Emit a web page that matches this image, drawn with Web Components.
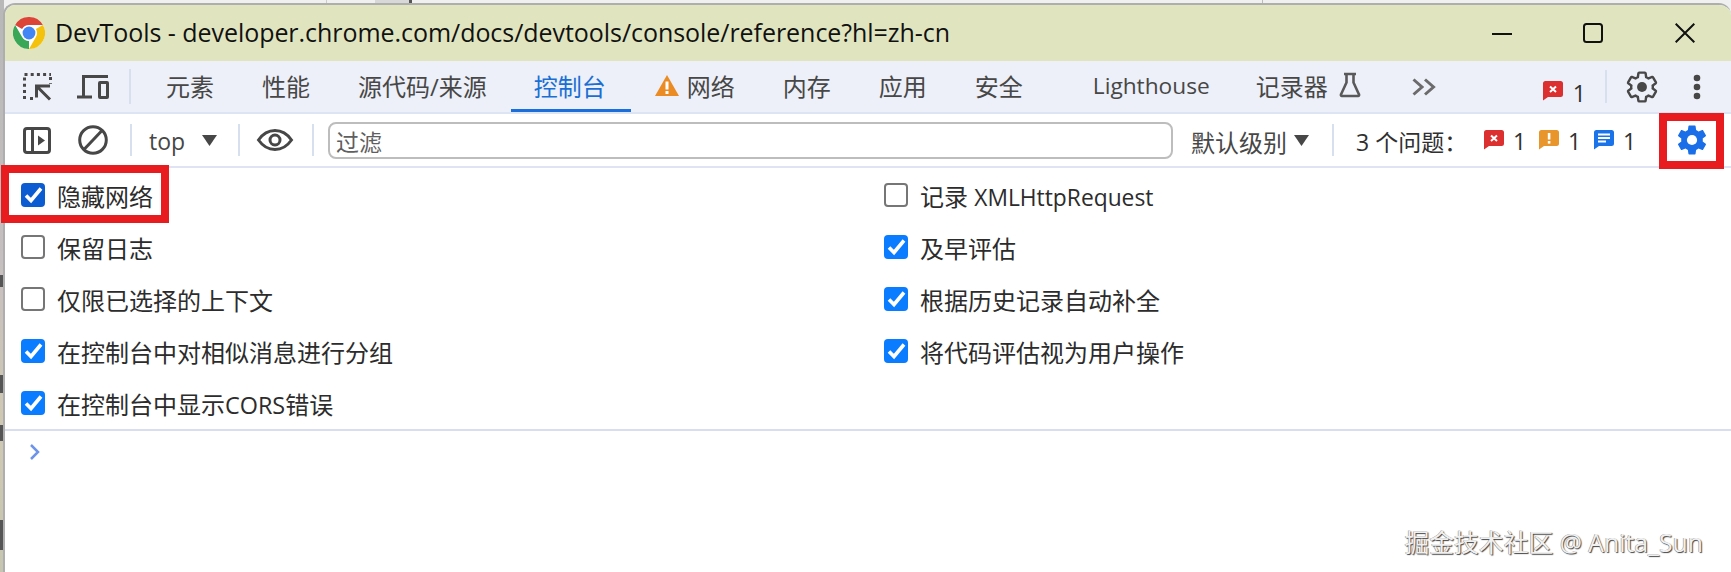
<!DOCTYPE html>
<html lang="zh-CN"><head><meta charset="utf-8"><title>DevTools</title>
<style>html,body{margin:0;padding:0;background:#fff}</style></head><body>
<dt-desktop>
  <dt-window>
    <dt-titlebar>DevTools - developer.chrome.com/docs/devtools/console/reference?hl=zh-cn</dt-titlebar>
    <dt-tabbar>
      <dt-icon name="inspect" style="margin-left:18px"></dt-icon>
      <dt-icon name="device" style="margin-left:25px"></dt-icon>
      <dt-divider style="margin-left:20px;margin-right:11px;height:35px"></dt-divider>
      <dt-tab>元素</dt-tab>
      <dt-tab>性能</dt-tab>
      <dt-tab>源代码/来源</dt-tab>
      <dt-tab active style="padding-left:23px;padding-right:25px">控制台</dt-tab>
      <dt-tab><dt-icon name="warn" style="margin-right:8px"></dt-icon>网络</dt-tab>
      <dt-tab>内存</dt-tab>
      <dt-tab>应用</dt-tab>
      <dt-tab>安全</dt-tab>
      <dt-tab style="margin-left:22px;font-size:22.700px">Lighthouse</dt-tab>
      <dt-tab style="margin-left:-2px">记录器<dt-icon name="flask" style="margin-left:11px"></dt-icon></dt-tab>
      <dt-icon name="more" style="margin-left:27px"></dt-icon>
      <dt-icon name="err" style="margin-left:107px;margin-top:9px"></dt-icon>
      <dt-count style="margin-left:10px;margin-top:11px;width:9px">1</dt-count>
      <dt-divider style="margin-left:23px;height:33px"></dt-divider>
      <dt-icon name="gear" style="margin-left:17px"></dt-icon>
      <dt-icon name="dots" style="margin-left:33px"></dt-icon>
    </dt-tabbar>
    <dt-toolbar>
      <dt-icon name="sidebar" style="margin-left:18px"></dt-icon>
      <dt-icon name="block" style="margin-left:27px"></dt-icon>
      <dt-divider style="margin-left:22px;height:32px"></dt-divider>
      <dt-label style="margin-left:17px;width:36px">top</dt-label>
      <dt-icon name="caret" style="margin-left:17px"></dt-icon>
      <dt-divider style="margin-left:21px;height:32px"></dt-divider>
      <dt-icon name="eye" style="margin-left:17px"></dt-icon>
      <dt-divider style="margin-left:19px;height:32px"></dt-divider>
      <dt-filter style="margin-left:14px">过滤</dt-filter>
      <dt-label style="margin-left:18px;width:96px;font-size:24px">默认级别</dt-label>
      <dt-icon name="caret" style="margin-left:7px"></dt-icon>
      <dt-divider style="margin-left:23px;height:32px"></dt-divider>
      <dt-label style="margin-left:22px;width:106px;color:#303030">3 个问题：</dt-label>
      <dt-icon name="err" style="margin-left:22px"></dt-icon>
      <dt-count style="margin-left:9px;width:12px">1</dt-count>
      <dt-icon name="warnb" style="margin-left:14px"></dt-icon>
      <dt-count style="margin-left:9px;width:13px">1</dt-count>
      <dt-icon name="info" style="margin-left:13px"></dt-icon>
      <dt-count style="margin-left:9px;width:12px">1</dt-count>
      <dt-icon name="gearblue" style="margin-left:39px;margin-right:21px"></dt-icon>
    </dt-toolbar>
    <dt-settings>
      <dt-check checked dark>隐藏网络</dt-check>
      <dt-check>保留日志</dt-check>
      <dt-check>仅限已选择的上下文</dt-check>
      <dt-check checked>在控制台中对相似消息进行分组</dt-check>
      <dt-check checked>在控制台中显示<span style="font-size:23.400px">CORS</span>错误</dt-check>
      <dt-check>记录 <span style="font-size:22.800px">XMLHttpRequest</span></dt-check>
      <dt-check checked>及早评估</dt-check>
      <dt-check checked>根据历史记录自动补全</dt-check>
      <dt-check checked>将代码评估视为用户操作</dt-check>
    </dt-settings>
    <dt-console></dt-console>
  </dt-window>
  <dt-redbox style="left:1px;top:165px;width:168px;height:58px"></dt-redbox>
  <dt-redbox style="left:1659px;top:113px;width:65px;height:56px"></dt-redbox>
  <dt-watermark>掘金技术社区 @ Anita_Sun</dt-watermark>
</dt-desktop>
<script>
const GEAR_OUTER="M19.14 12.94c.04-.3.06-.61.06-.94 0-.32-.02-.64-.07-.94l2.03-1.58c.18-.14.23-.41.12-.61l-1.92-3.32c-.12-.22-.37-.29-.59-.22l-2.39.96c-.5-.38-1.03-.7-1.62-.94l-.36-2.54c-.04-.24-.24-.41-.48-.41h-3.84c-.24 0-.43.17-.47.41l-.36 2.54c-.59.24-1.13.57-1.62.94l-2.39-.96c-.22-.08-.47 0-.59.22L2.74 8.87c-.12.21-.08.47.12.61l2.03 1.58c-.05.3-.09.63-.09.94s.02.64.07.94l-2.03 1.58c-.18.14-.23.41-.12.61l1.92 3.32c.12.22.37.29.59.22l2.39-.96c.5.38 1.03.7 1.62.94l.36 2.54c.05.24.24.41.48.41h3.84c.24 0 .44-.17.47-.41l.36-2.54c.59-.24 1.13-.56 1.62-.94l2.39.96c.22.08.47 0 .59-.22l1.92-3.32c.12-.22.07-.47-.12-.61l-2.01-1.58z";
const BUBBLE="M2.5 0h15A2.5 2.5 0 0 1 20 2.5v11a2.5 2.5 0 0 1-2.5 2.5H5l-5 3.5V2.5A2.5 2.5 0 0 1 2.5 0z";
const ICONS={
 inspect:[29,27,`<g fill="none" stroke="#474747" stroke-width="3"><path d="M1.5 1.5H28" stroke-dasharray="3 3.2"/><path d="M1.5 4.5V26" stroke-dasharray="3 3.2"/><path d="M27.5 4V11" stroke-dasharray="3 3.2"/><path d="M7 25.5h3" /><path d="M27 13H13.500V24.500M13.500 13 27 26.500" stroke-width="3"/></g>`],
 device:[32,24,`<g fill="none" stroke="#474747" stroke-width="3"><path d="M0 22h15M6.500 22V1.500H31"/><rect x="22.500" y="7.500" width="8" height="15" rx=".5"/></g>`],
 warn:[24,21,`<path d="M12 0 24 21H0z" fill="#ea8b24"/><rect x="10.500" y="6.500" width="3" height="8" fill="#fff"/><rect x="10.500" y="16" width="3" height="3" fill="#fff"/>`],
 flask:[22,26,`<path d="M5 2h12M7.500 2v8.500L2 22.500a1 1 0 0 0 1 1.500h16a1 1 0 0 0 1-1.500L14.500 10.500V2" fill="none" stroke="#595959" stroke-width="2.600"/>`],
 more:[24,18,`<path d="M1.500 1.500 10 9l-8.500 7.500M13 1.500 21.500 9 13 16.500" fill="none" stroke="#6b6b6b" stroke-width="3"/>`],
 err:[20,20,`<path d="${BUBBLE}" fill="#dc2f2f"/><path d="M7 5.500l6 5.500M13 5.500l-6 5.500" stroke="#fff" stroke-width="2"/>`],
 warnb:[20,20,`<path d="${BUBBLE}" fill="#e8952b"/><rect x="8.800" y="3" width="2.600" height="6.500" fill="#fff"/><rect x="8.800" y="11" width="2.600" height="2.600" fill="#fff"/>`],
 info:[20,20,`<path d="${BUBBLE}" fill="#1a73e8"/><path d="M4 4.500h12M4 8h12M4 11.500h8" stroke="#fff" stroke-width="2"/>`],
 gear:[36,36,`<svg x="0" y="0" width="36" height="36" viewBox="0 0 24 24"><path d="${GEAR_OUTER}" fill="none" stroke="#474747" stroke-width="1.600"/><circle cx="12" cy="12" r="3.300" fill="#474747"/></svg>`],
 gearblue:[36,36,`<svg width="36" height="36" viewBox="0 0 24 24"><path d="${GEAR_OUTER}" fill="#1a6fe8"/><circle cx="12" cy="12" r="3.400" fill="#fff"/></svg>`],
 dots:[8,26,`<circle cx="4" cy="4" r="3.300" fill="#474747"/><circle cx="4" cy="13" r="3.300" fill="#474747"/><circle cx="4" cy="22" r="3.300" fill="#474747"/>`],
 sidebar:[28,27,`<rect x="1.500" y="1.500" width="25" height="24" rx="2.500" fill="none" stroke="#474747" stroke-width="3"/><path d="M9.500 2v23" stroke="#474747" stroke-width="3"/><path d="M15 8.500l7 5-7 5z" fill="#474747"/>`],
 block:[30,30,`<circle cx="15" cy="15" r="13.300" fill="none" stroke="#474747" stroke-width="3"/><path d="M6 24.500 24 5.500" stroke="#474747" stroke-width="3"/>`],
 caret:[15,11,`<path d="M0 0h15L7.500 11z" fill="#474747"/>`],
 eye:[36,22,`<path d="M1.500 11C6 4.500 11.500 1.500 18 1.500S30 4.500 34.500 11C30 17.500 24.500 20.500 18 20.500S6 17.500 1.500 11z" fill="none" stroke="#474747" stroke-width="3"/><circle cx="18" cy="11" r="5" fill="none" stroke="#474747" stroke-width="3"/>`]
};
const FONT='"Open Sans","Noto Sans CJK SC",sans-serif';
function def(name,html){
  customElements.define(name,class extends HTMLElement{
    connectedCallback(){
      if(this.shadowRoot)return;
      const r=this.attachShadow({mode:'open'});
      r.innerHTML=typeof html==='function'?html(this):html;
    }
  });
}
def('dt-desktop',`<style>:host{display:block;position:relative;width:1731px;height:572px;overflow:hidden;
  font-family:${FONT};background:
  linear-gradient(#555,#555) 409px 0/3px 5px no-repeat,
  linear-gradient(#d8d8d8,#d8d8d8) 375px 0/34px 5px no-repeat,
  linear-gradient(#ccc,#ccc) 326px 0/1px 5px no-repeat,
  linear-gradient(#bbb,#bbb) 1262px 0/1px 5px no-repeat,
  linear-gradient(#555,#555) 0 275px/3px 12px no-repeat,
  linear-gradient(#555,#555) 0 375px/3px 18px no-repeat,
  linear-gradient(#555,#555) 0 425px/3px 16px no-repeat,
  linear-gradient(#555,#555) 0 520px/3px 30px no-repeat,
  linear-gradient(#b8b8b8,#c6bfc0 45%,#cfc9b2 75%,#c6c6b0) 0 0/4px 100% no-repeat,
  #f0f0f0}</style><slot></slot>`);
def('dt-window',`<style>:host{position:absolute;left:3px;top:3px;right:0;bottom:0;display:flex;flex-direction:column;
  background:#fff;border-left:2px solid #aeaeae;border-top:2px solid #aeaeae;border-top-left-radius:12px;border-top-right-radius:12px;overflow:hidden}</style><slot></slot>`);
def('dt-titlebar',`<style>:host{display:flex;align-items:center;height:56px;flex:none;background:#e0e5c0;color:#111;font-size:25px}
 .t{margin-left:10px;white-space:nowrap;letter-spacing:-.05px;position:relative;top:-1px}.c{margin-left:auto;display:flex;align-items:center}
 svg{display:block}</style>
 <svg width="32" height="32" viewBox="0 0 32 32" style="margin-left:8px;flex:none">
  <circle cx="16" cy="16" r="16" fill="#fff"/>
  <path d="M2.140 8A16 16 0 0 1 29.860 8H16A8 8 0 0 0 9.070 12z" fill="#db4437"/>
  <path d="M2.140 8A16 16 0 0 1 29.860 8H16A8 8 0 0 0 9.070 12z" fill="#f4c20d" transform="rotate(120 16 16)"/>
  <path d="M2.140 8A16 16 0 0 1 29.860 8H16A8 8 0 0 0 9.070 12z" fill="#3aa757" transform="rotate(240 16 16)"/>
  <circle cx="16" cy="16" r="6.400" fill="#4285f4"/></svg>
 <span class="t"><slot></slot></span>
 <span class="c">
  <svg width="20" height="20" style="margin-right:71px"><path d="M0 11h20" stroke="#111" stroke-width="2"/></svg>
  <svg width="20" height="20" style="margin-right:72px"><rect x="1" y="1" width="18" height="18" rx="2.500" fill="none" stroke="#111" stroke-width="2"/></svg>
  <svg width="20" height="20" style="margin-right:36px"><path d="M.7.7l18.600 18.600M19.300.7.7 19.300" stroke="#111" stroke-width="2"/></svg>
 </span>`);
def('dt-tabbar',`<style>:host{display:flex;align-items:center;height:51px;flex:none;background:#edf0f8;border-bottom:2px solid #dde5f4}</style><slot></slot>`);
def('dt-toolbar',`<style>:host{display:flex;align-items:center;height:52px;flex:none;background:#fff;border-bottom:2px solid #e0e3f3}</style><slot></slot>`);
def('dt-tab',`<style>:host{display:flex;align-items:center;align-self:stretch;flex:none;padding:0 24px;box-sizing:border-box;font-size:24px;color:#474747;border-bottom:3px solid transparent;white-space:nowrap}
 :host([active]){color:#1a6fd4;border-bottom-color:#1a6fdc}</style><slot></slot>`);
def('dt-divider',`<style>:host{display:block;width:2px;flex:none;background:#d6e0ee}</style>`);
def('dt-icon',el=>{const [w,h,b]=ICONS[el.getAttribute('name')];
 return `<style>:host{display:block;flex:none;width:${w}px;height:${h}px}svg{display:block;overflow:visible}</style><svg width="${w}" height="${h}" viewBox="0 0 ${w} ${h}">${b}</svg>`});
def('dt-label',`<style>:host{display:block;flex:none;font-size:23px;color:#474747;white-space:nowrap;padding-top:2px}</style><slot></slot>`);
def('dt-count',`<style>:host{display:block;flex:none;font-size:23px;color:#303030;line-height:1;padding-top:2px}</style><slot></slot>`);
def('dt-filter',`<style>:host{display:flex;align-items:center;flex:1;min-width:0;height:37px;box-sizing:border-box;border:2px solid #bdbdbd;border-radius:8px;padding:2px 0 0 6px;font-size:23px;color:#5f5f5f}</style><slot></slot>`);
def('dt-settings',`<style>:host{display:grid;flex:none;grid-template-rows:repeat(5,52px);grid-auto-flow:column;grid-template-columns:863px 1fr;height:260px;padding-left:16px;padding-top:1px;border-bottom:2px solid #d8deef}</style><slot></slot>`);
def('dt-check',el=>{const c=el.hasAttribute('checked');
 return `<style>:host{display:flex;align-items:center;font-size:24px;color:#2c2c2c;white-space:nowrap}
 .b{width:24px;height:24px;box-sizing:border-box;border-radius:4px;margin-right:12px;flex:none;display:block}
 .u{border:2.500px solid #767676;background:#fff}.k{background:${el.hasAttribute('dark')?'#0b5cd0':'#0a7cff'}}</style>
 ${c?`<svg class="b k" viewBox="0 0 24 24"><path d="M5 12.500l5 5L20 5.500" fill="none" stroke="#fff" stroke-width="3.600"/></svg>`:`<span class="b u"></span>`}<span><slot></slot></span>`});
def('dt-console',`<style>:host{display:block;flex:1;padding:13px 0 0 25px}svg{display:block}</style><svg width="10" height="16"><path d="M1 1l7 7-7 7" fill="none" stroke="#6d94e8" stroke-width="2.500"/></svg>`);
def('dt-redbox',`<style>:host{position:absolute;box-sizing:border-box;border:8px solid #e81c1f}</style>`);
def('dt-watermark',`<style>:host{position:absolute;right:28px;top:523px;font-size:24.800px;color:#f0f0f0;white-space:nowrap;text-shadow:1px 1px 1px #444,-.5px -.5px .5px #888}</style><slot></slot>`);
</script>
</body></html>
